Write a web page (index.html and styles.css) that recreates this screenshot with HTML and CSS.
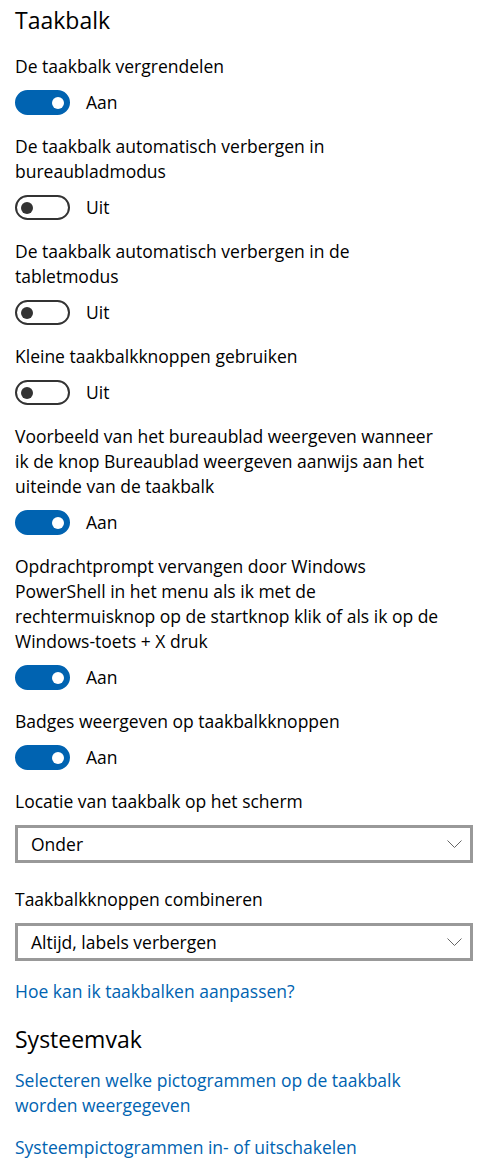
FILE: index.html
```html
<!DOCTYPE html>
<html lang="nl">

<head>
  <meta charset="UTF-8" />
  <meta name="viewport" content="width=device-width, initial-scale=1" />
  <title>Taakbalk | Instellingen</title>
  <link rel="stylesheet" href="styles.css">
</head>

<body>

  <div class="pagina">
    <h2 class="kop">Taakbalk</h2>

    <!-- Schakelaars -->
    <div class="instelling">
      <p class="label">De taakbalk vergrendelen</p>
      <div class="schakel">
        <span class="switch aan"><span class="knop"></span></span>
        <span>Aan</span>
      </div>
    </div>

    <div class="instelling">
      <p class="label">De taakbalk automatisch verbergen in<br>bureaubladmodus</p>
      <div class="schakel">
        <span class="switch"><span class="knop"></span></span>
        <span>Uit</span>
      </div>
    </div>

    <div class="instelling">
      <p class="label">De taakbalk automatisch verbergen in de<br>tabletmodus</p>
      <div class="schakel">
        <span class="switch"><span class="knop"></span></span>
        <span>Uit</span>
      </div>
    </div>

    <div class="instelling">
      <p class="label">Kleine taakbalkknoppen gebruiken</p>
      <div class="schakel">
        <span class="switch"><span class="knop"></span></span>
        <span>Uit</span>
      </div>
    </div>

    <div class="instelling">
      <p class="label">Voorbeeld van het bureaublad weergeven wanneer<br>ik de knop Bureaublad weergeven aanwijs aan het<br>uiteinde van de taakbalk</p>
      <div class="schakel">
        <span class="switch aan"><span class="knop"></span></span>
        <span>Aan</span>
      </div>
    </div>

    <div class="instelling">
      <p class="label">Opdrachtprompt vervangen door Windows<br>PowerShell in het menu als ik met de<br>rechtermuisknop op de startknop klik of als ik op de<br>Windows-toets + X druk</p>
      <div class="schakel">
        <span class="switch aan"><span class="knop"></span></span>
        <span>Aan</span>
      </div>
    </div>

    <div class="instelling">
      <p class="label">Badges weergeven op taakbalkknoppen</p>
      <div class="schakel">
        <span class="switch aan"><span class="knop"></span></span>
        <span>Aan</span>
      </div>
    </div>

    <!-- Keuzelijsten -->
    <div class="keuze">
      <p class="label">Locatie van taakbalk op het scherm</p>
      <div class="lijst">
        <span>Onder</span>
        <svg width="15" height="8" viewBox="0 0 15 8"><polyline points="0.5,0.5 7.5,7.5 14.5,0.5" fill="none" stroke="#666" stroke-width="1" /></svg>
      </div>
    </div>

    <div class="keuze">
      <p class="label">Taakbalkknoppen combineren</p>
      <div class="lijst">
        <span>Altijd, labels verbergen</span>
        <svg width="15" height="8" viewBox="0 0 15 8"><polyline points="0.5,0.5 7.5,7.5 14.5,0.5" fill="none" stroke="#666" stroke-width="1" /></svg>
      </div>
    </div>

    <a class="link los" href="#">Hoe kan ik taakbalken aanpassen?</a>

    <h2 class="kop tweede">Systeemvak</h2>

    <a class="link" href="#">Selecteren welke pictogrammen op de taakbalk<br>worden weergegeven</a>
    <a class="link onder" href="#">Systeempictogrammen in- of uitschakelen</a>
  </div>

</body>

</html>
```

FILE: styles.css
```css
* {
  margin: 0;
  padding: 0;
  box-sizing: border-box;
}

body,
html {
  font-family: 'Open Sans', 'Noto Sans', sans-serif;
  background-color: #fff;
  color: #000;
}

.pagina {
  padding: 3px 15px 0;
  font-size: 17.5px;
  line-height: 25px;
}

.kop {
  font-weight: 400;
  font-size: 23px;
  line-height: 34px;
}

.kop.tweede {
  margin-top: 18px;
}

.instelling {
  margin-top: 17px;
}

.instelling + .instelling {
  margin-top: 19px;
}

.schakel {
  display: flex;
  align-items: center;
  gap: 16px;
  margin-top: 11px;
  height: 25px;
}

.switch {
  display: flex;
  align-items: center;
  width: 55px;
  height: 25px;
  padding: 0 4px;
  border: 2px solid #333;
  border-radius: 13px;
}

.switch .knop {
  width: 12px;
  height: 12px;
  border-radius: 50%;
  background-color: #333;
}

.switch.aan {
  justify-content: flex-end;
  background-color: #0063b1; /* accentkleur */
  border-color: #0063b1;
}

.switch.aan .knop {
  background-color: #fff;
}

.keuze {
  margin-top: 19px;
}

.keuze + .keuze {
  margin-top: 24px;
}

.lijst {
  display: flex;
  align-items: center;
  justify-content: space-between;
  width: 458px;
  height: 38px;
  margin-top: 11px;
  padding: 0 8px 0 13px;
  border: 3px solid #999;
}

.link {
  display: block;
  color: #0063b1;
  text-decoration: none;
}

.link.los {
  margin-top: 18px;
}

.kop.tweede + .link {
  margin-top: 12px;
}

.link.onder {
  margin-top: 17px;
}
```
